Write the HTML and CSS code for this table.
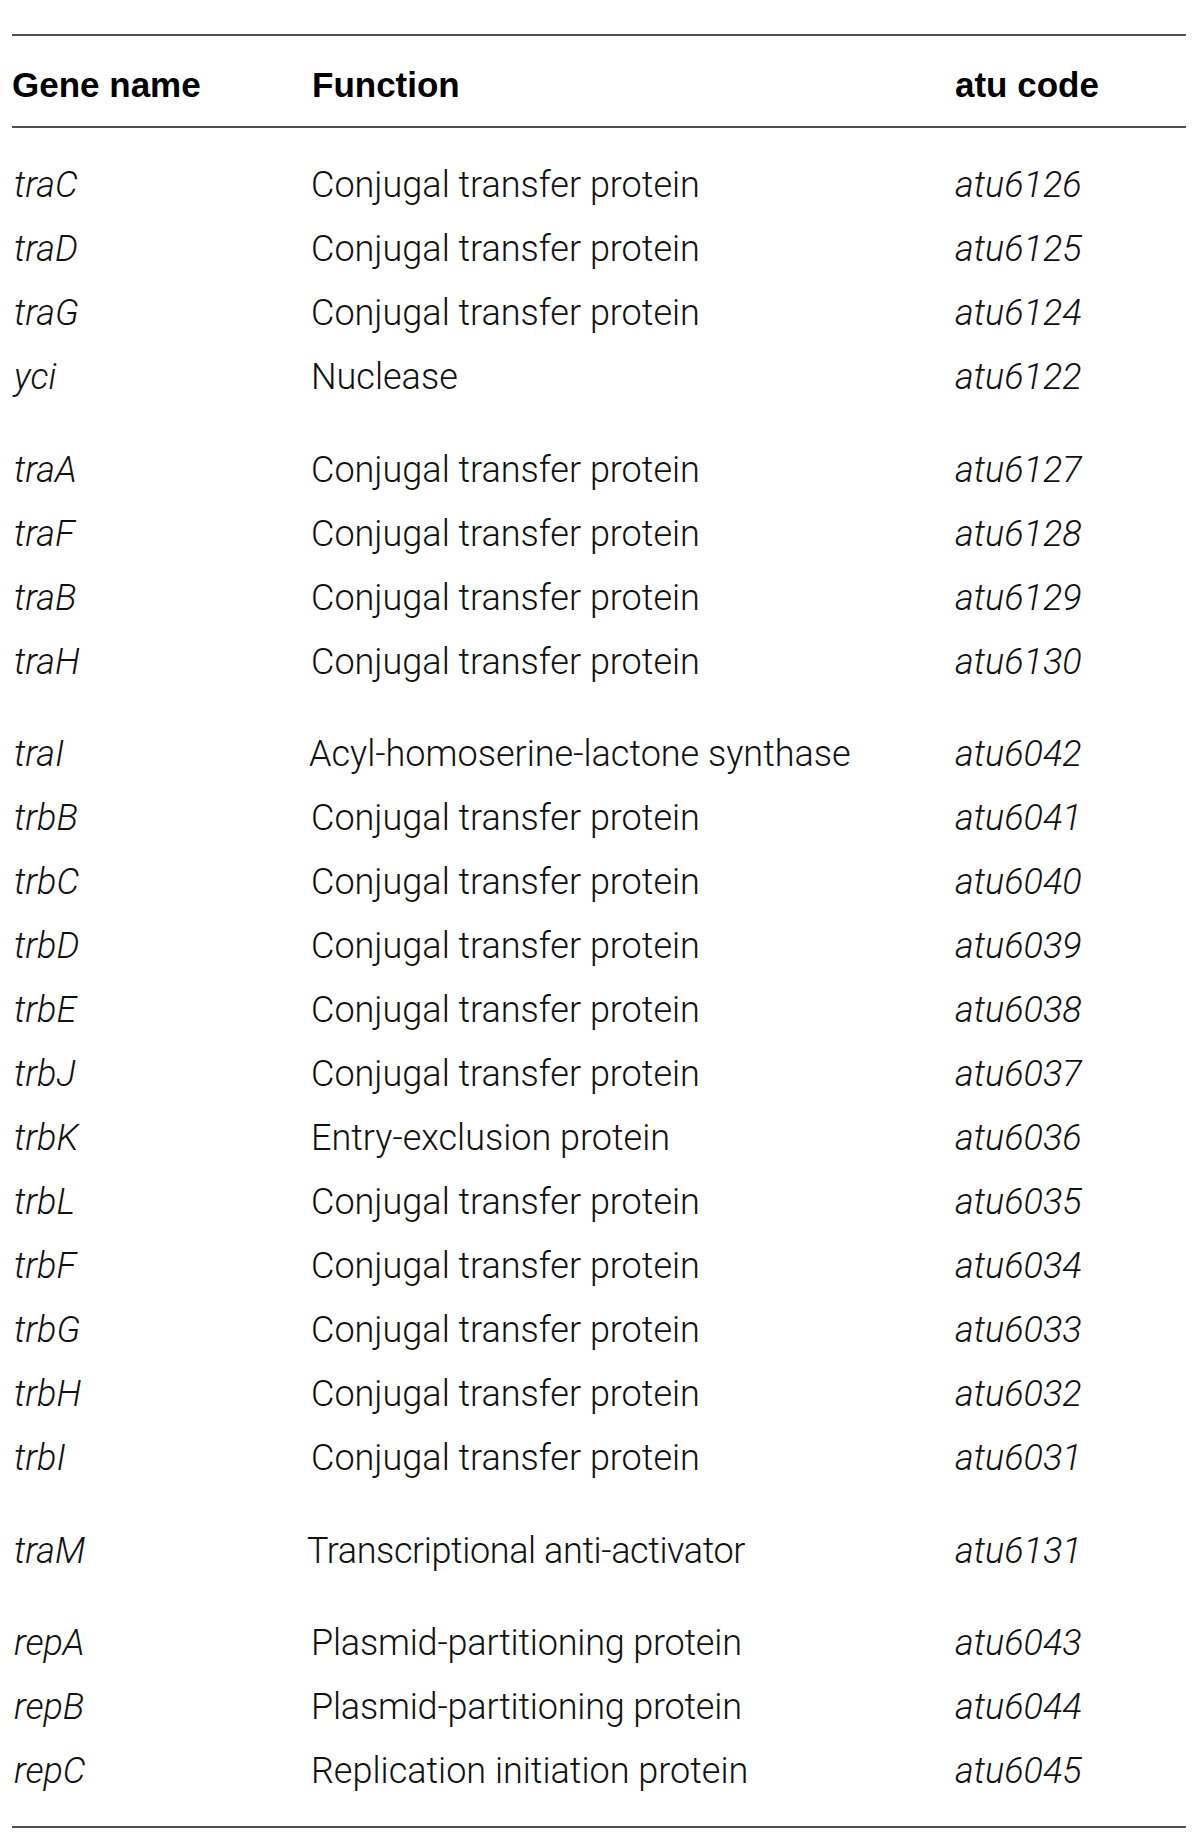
FILE: index.html
```html
<!DOCTYPE html>
<html lang="en">
<head>
<meta charset="utf-8">
<title>Gene table</title>
<link rel="stylesheet" href="styles.css">
</head>
<body>
<div class="table">
  <div class="head">
    <div class="th">Gene name</div>
    <div class="th">Function</div>
    <div class="th">atu code</div>
  </div>
  <div class="body">
    <div class="group">
      <div class="row"><div class="gene">traC</div><div class="fn">Conjugal transfer protein</div><div class="code">atu6126</div></div>
      <div class="row"><div class="gene">traD</div><div class="fn">Conjugal transfer protein</div><div class="code">atu6125</div></div>
      <div class="row"><div class="gene">traG</div><div class="fn">Conjugal transfer protein</div><div class="code">atu6124</div></div>
      <div class="row"><div class="gene">yci</div><div class="fn">Nuclease</div><div class="code">atu6122</div></div>
    </div>
    <div class="group">
      <div class="row"><div class="gene">traA</div><div class="fn">Conjugal transfer protein</div><div class="code">atu6127</div></div>
      <div class="row"><div class="gene">traF</div><div class="fn">Conjugal transfer protein</div><div class="code">atu6128</div></div>
      <div class="row"><div class="gene">traB</div><div class="fn">Conjugal transfer protein</div><div class="code">atu6129</div></div>
      <div class="row"><div class="gene">traH</div><div class="fn">Conjugal transfer protein</div><div class="code">atu6130</div></div>
    </div>
    <div class="group">
      <div class="row"><div class="gene">traI</div><div class="fn fn-acyl">Acyl-homoserine-lactone synthase</div><div class="code">atu6042</div></div>
      <div class="row"><div class="gene">trbB</div><div class="fn">Conjugal transfer protein</div><div class="code">atu6041</div></div>
      <div class="row"><div class="gene">trbC</div><div class="fn">Conjugal transfer protein</div><div class="code">atu6040</div></div>
      <div class="row"><div class="gene">trbD</div><div class="fn">Conjugal transfer protein</div><div class="code">atu6039</div></div>
      <div class="row"><div class="gene">trbE</div><div class="fn">Conjugal transfer protein</div><div class="code">atu6038</div></div>
      <div class="row"><div class="gene">trbJ</div><div class="fn">Conjugal transfer protein</div><div class="code">atu6037</div></div>
      <div class="row"><div class="gene">trbK</div><div class="fn">Entry-exclusion protein</div><div class="code">atu6036</div></div>
      <div class="row"><div class="gene">trbL</div><div class="fn">Conjugal transfer protein</div><div class="code">atu6035</div></div>
      <div class="row"><div class="gene">trbF</div><div class="fn">Conjugal transfer protein</div><div class="code">atu6034</div></div>
      <div class="row"><div class="gene">trbG</div><div class="fn">Conjugal transfer protein</div><div class="code">atu6033</div></div>
      <div class="row"><div class="gene">trbH</div><div class="fn">Conjugal transfer protein</div><div class="code">atu6032</div></div>
      <div class="row"><div class="gene">trbI</div><div class="fn">Conjugal transfer protein</div><div class="code">atu6031</div></div>
    </div>
    <div class="group">
      <div class="row"><div class="gene">traM</div><div class="fn fn-tra">Transcriptional anti-activator</div><div class="code">atu6131</div></div>
    </div>
    <div class="group">
      <div class="row"><div class="gene">repA</div><div class="fn fn-tight">Plasmid-partitioning protein</div><div class="code">atu6043</div></div>
      <div class="row"><div class="gene">repB</div><div class="fn fn-tight">Plasmid-partitioning protein</div><div class="code">atu6044</div></div>
      <div class="row"><div class="gene">repC</div><div class="fn">Replication initiation protein</div><div class="code">atu6045</div></div>
    </div>
  </div>
</div>
</body>
</html>
```
FILE: styles.css
```css
html, body {
  margin: 0;
  padding: 0;
  background: #ffffff;
}

.table {
  width: 1174px;
  margin: 34px 12px 0;
  border-top: 2px solid #505050;
  border-bottom: 2px solid #505050;
  color: #111111;
}

.head {
  display: grid;
  grid-template-columns: 300px 643px 1fr;
  height: 90px;
  align-items: center;
  border-bottom: 2px solid #505050;
}

.th {
  font-family: "Liberation Sans", Arial, sans-serif;
  font-weight: 700;
  font-size: 35px;
  line-height: 1;
  color: #000000;
  padding-top: 6px;
}

.body {
  padding: 24px 0;
}

.group + .group {
  margin-top: 28.5px;
}

.row {
  display: grid;
  grid-template-columns: 300px 643px 1fr;
  height: 64px;
  align-items: center;
  font-family: Roboto, "Liberation Sans", sans-serif;
  font-weight: 300;
  font-size: 36px;
  line-height: 1;
}

.gene, .code {
  font-style: italic;
}

.gene, .fn, .code {
  padding-top: 2px;
}

.gene {
  padding-left: 2px;
}

.fn {
  margin-left: -1px;
}

.fn-acyl {
  margin-left: -3px;
}

.fn-tra {
  margin-left: -5px;
  letter-spacing: -0.4px;
}

.fn-tight {
  letter-spacing: -0.2px;
}
```
